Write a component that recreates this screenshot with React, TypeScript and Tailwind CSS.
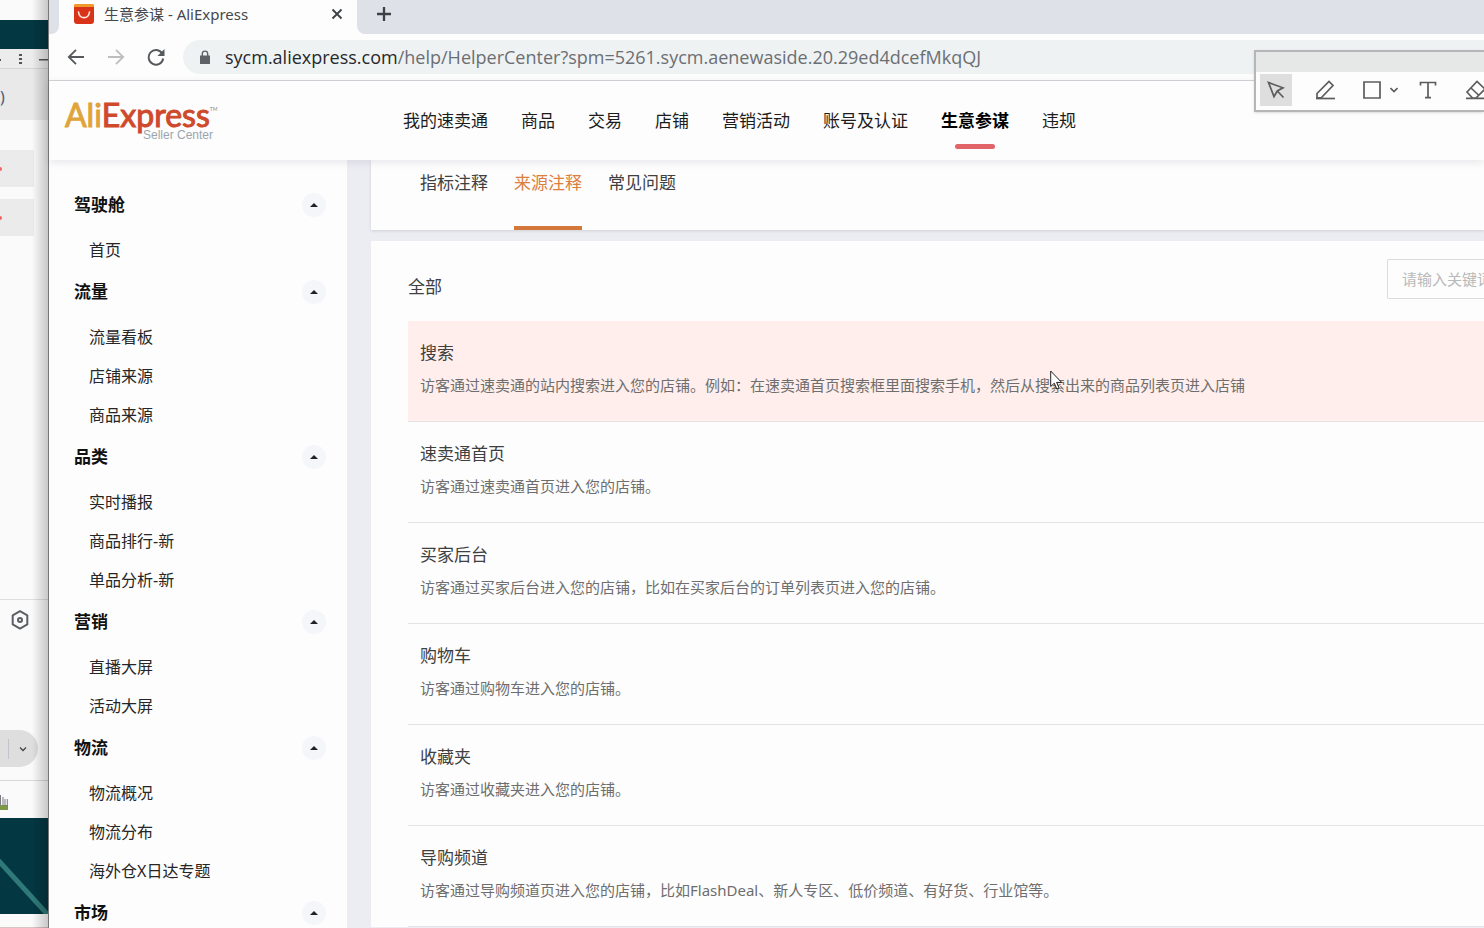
import { ReactNode } from "react";

type Group = { title: string; items: string[] };

const groups: Group[] = [
  { title: "驾驶舱", items: ["首页"] },
  { title: "流量", items: ["流量看板", "店铺来源", "商品来源"] },
  { title: "品类", items: ["实时播报", "商品排行-新", "单品分析-新"] },
  { title: "营销", items: ["直播大屏", "活动大屏"] },
  { title: "物流", items: ["物流概况", "物流分布", "海外仓X日达专题"] },
  { title: "市场", items: [] },
];

const navItems = ["我的速卖通", "商品", "交易", "店铺", "营销活动", "账号及认证", "生意参谋", "违规"];
const tabs = ["指标注释", "来源注释", "常见问题"];

const sources = [
  { name: "搜索", text: "访客通过速卖通的站内搜索进入您的店铺。例如：在速卖通首页搜索框里面搜索手机，然后从搜索出来的商品列表页进入店铺" },
  { name: "速卖通首页", text: "访客通过速卖通首页进入您的店铺。" },
  { name: "买家后台", text: "访客通过买家后台进入您的店铺，比如在买家后台的订单列表页进入您的店铺。" },
  { name: "购物车", text: "访客通过购物车进入您的店铺。" },
  { name: "收藏夹", text: "访客通过收藏夹进入您的店铺。" },
  { name: "导购频道", text: "访客通过导购频道页进入您的店铺，比如FlashDeal、新人专区、低价频道、有好货、行业馆等。" },
];

function IconButton({ label, className = "", children }: { label: string; className?: string; children: ReactNode }) {
  return (
    <button type="button" aria-label={label} className={`flex shrink-0 items-center justify-center ${className}`}>
      {children}
    </button>
  );
}

function BackgroundWindow() {
  return (
    <div className="relative flex w-12 shrink-0 flex-col overflow-hidden bg-[#fafafa]">
      <div className="h-5 shrink-0" />
      <div className="h-[29px] shrink-0 bg-[#033742]" />
      <div className="flex h-5 shrink-0 items-center border-b border-[#d4d4d4] bg-[#ececec]">
        <svg viewBox="0 0 48 20" className="h-5 w-12" fill="#555">
          <rect x="0" y="10" width="1" height="2" />
          <rect x="19" y="5" width="3" height="2" />
          <rect x="19" y="9" width="3" height="2" />
          <rect x="19" y="13" width="3" height="2" />
          <rect x="39" y="10" width="9" height="1.500" />
        </svg>
      </div>
      <div className="flex h-[51px] shrink-0 items-center bg-[#e9e9e9] pt-1 text-base text-[#4d5a75]">)</div>
      <div className="mt-[30px] flex h-[37px] w-[34px] shrink-0 items-center bg-[#ebebeb]">
        <span className="h-1 w-0.5 rounded-r bg-[#e66]" />
      </div>
      <div className="mt-3 flex h-[37px] w-[34px] shrink-0 items-center bg-[#ebebeb]">
        <span className="h-1 w-0.5 rounded-r bg-[#e66]" />
      </div>
      <div className="mt-[363px] flex h-[131px] shrink-0 flex-col border-t border-[#dedede] pt-2.5">
        <svg viewBox="0 0 20 20" className="ml-2.5 h-5 w-5" fill="none" stroke="#5c5f63" strokeWidth="2" strokeLinejoin="round">
          <path d="M10 1.2 17.3 5.4v9L10 18.6l-7.3-4.2v-9z" />
          <circle cx="10" cy="10" r="2" />
        </svg>
      </div>
      <div className="flex h-[37px] w-[38px] shrink-0 items-center rounded-r-full bg-[#dedede]">
        <span className="ml-2 h-5 w-px bg-[#c3c3cb]" />
        <svg viewBox="0 0 8 6" className="ml-2.5 h-1.5 w-2" fill="none" stroke="#444" strokeWidth="1.3">
          <path d="M1 1.5 4 4.5 7 1.5" />
        </svg>
      </div>
      <div className="mt-[13px] h-[38px] shrink-0 border-t border-[#d8d8d8] pt-3">
        <svg viewBox="0 0 10 17" className="h-[17px] w-2.5">
          <path d="M0 12h8v5H0z" fill="#7c9a45" />
          <path d="M.5 2v10M3 4v9M5 6v7M7.3 6v8" stroke="#777b80" strokeWidth="1" />
        </svg>
      </div>
      <div className="h-24 shrink-0 bg-[#033742]">
        <svg viewBox="0 0 48 96" className="h-24 w-12">
          <path d="M-2 42 49 98" stroke="#2f7a78" strokeWidth="5" />
        </svg>
      </div>
      <div className="mt-[13px] h-px shrink-0 bg-[#d5c5c5]" />
      <div className="absolute inset-y-0 right-0 w-4 bg-linear-to-r from-transparent to-black/20" />
    </div>
  );
}

function BrowserChrome() {
  return (
    <>
      <div className="flex h-[34px] shrink-0">
        <div className="w-2.5 rounded-br-lg bg-[#dee1e7]" />
        <div className="flex w-[298px] items-center pb-1.5 pl-[15px] pr-3.5">
          <svg viewBox="0 0 20 20" className="h-5 w-5">
            <rect width="20" height="20" rx="3" fill="#d9331a" />
            <path d="M2 0h16a2 2 0 0 1 2 3H0a2 2 0 0 1 2-3z" fill="#f09a2c" />
            <path d="M4.5 8c1 7.500 10 7.500 11 0" fill="none" stroke="#ffe9dd" strokeWidth="1.6" strokeLinecap="round" />
          </svg>
          <span className="ml-2.5 flex-1 text-[15px] leading-5 text-[#45484c]">生意参谋 - AliExpress</span>
          <IconButton label="关闭标签页">
            <svg viewBox="0 0 12 12" className="h-3 w-3" stroke="#3c4043" strokeWidth="1.8">
              <path d="M1.500 1.500 10.500 10.500M10.500 1.500 1.500 10.500" />
            </svg>
          </IconButton>
        </div>
        <div className="flex flex-1 items-center rounded-bl-lg bg-[#dee1e7] pb-1.5 pl-[19px]">
          <IconButton label="新标签页">
            <svg viewBox="0 0 16 16" className="h-4 w-4" stroke="#3c4043" strokeWidth="2.300">
              <path d="M8 1v14M1 8h14" />
            </svg>
          </IconButton>
        </div>
      </div>
      <div className="flex h-[47px] shrink-0 items-center border-b border-[#d3d5d8] pl-[18px]">
        <IconButton label="后退">
          <svg viewBox="0 0 18 18" className="h-[18px] w-[18px]" fill="none" stroke="#55585c" strokeWidth="1.8">
            <path d="M17 9H2M9 1.800 1.800 9 9 16.200" />
          </svg>
        </IconButton>
        <IconButton label="前进" className="ml-[22px]">
          <svg viewBox="0 0 18 18" className="h-[18px] w-[18px]" fill="none" stroke="#bcbec0" strokeWidth="1.8">
            <path d="M1 9h15M9 1.800 16.200 9 9 16.200" />
          </svg>
        </IconButton>
        <IconButton label="重新加载" className="ml-[22px]">
          <svg viewBox="0 0 18 18" className="h-[18px] w-[18px]" fill="none" stroke="#55585c" strokeWidth="1.900">
            <path d="M15.200 5.500A7.300 7.300 0 1 0 16.200 10.500" />
            <path d="M17.500 1v7h-7z" fill="#55585c" stroke="none" />
          </svg>
        </IconButton>
        <div className="ml-[18px] flex h-[34px] flex-1 items-center rounded-l-full bg-[#eff2f3] pl-4">
          <svg viewBox="0 0 12 14" className="h-3.5 w-3" fill="#5f6368">
            <path d="M1 5.500h10V14H1z" />
            <path d="M3.300 6V3.800a2.700 2.700 0 0 1 5.400 0V6" fill="none" stroke="#5f6368" strokeWidth="1.400" />
          </svg>
          <p className="ml-3.5 whitespace-nowrap font-['Open_Sans','Noto_Sans',sans-serif] text-[18px] leading-6 text-[#6b6f73]">
            <span className="text-[#26282b]">sycm.aliexpress.com</span>
            /help/HelperCenter?spm=5261.sycm.aenewaside.20.29ed4dcefMkqQJ
          </p>
        </div>
      </div>
    </>
  );
}

function Logo() {
  return (
    <a href="#home" className="flex w-[150px] shrink-0 flex-col pb-0.5">
      <span className="flex font-['Lato',sans-serif] text-[32px] leading-8">
        <span className="text-[#dfa53c] [-webkit-text-stroke:1px_#dfa53c]">Ali</span>
        <span className="text-[#cf4a2c] [-webkit-text-stroke:1px_#cf4a2c]">Express</span>
        <span className="text-[5px] leading-[20px] text-[#888]">TM</span>
      </span>
      <span className="-mt-0.5 self-end pr-0.5 font-['Liberation_Sans',sans-serif] text-xs leading-3 text-[#9ba5ae]">
        Seller Center
      </span>
    </a>
  );
}

function SiteHeader() {
  return (
    <header className="relative z-10 flex h-[79px] shrink-0 items-center bg-[#fdfdfd] pl-4 shadow-[0_2px_8px_rgba(60,60,90,0.12)]">
      <Logo />
      <nav className="ml-[188px] flex gap-[33px] whitespace-nowrap pt-px text-[17px] leading-6 text-[#1c1c1c]">
        {navItems.map((item) =>
          item === "生意参谋" ? (
            <a key={item} href="#nav" className="relative font-bold text-black">
              {item}
              <span className="absolute -bottom-4 left-1/2 h-[5px] w-10 -translate-x-1/2 rounded-full bg-[#e16468]" />
            </a>
          ) : (
            <a key={item} href="#nav">
              {item}
            </a>
          ),
        )}
      </nav>
    </header>
  );
}

function Sidebar() {
  return (
    <aside className="w-[298px] shrink-0 bg-[#fdfdfd] pl-[25px] pr-[21px] pt-[22px]">
      {groups.map((group) => (
        <section key={group.title}>
          <h2 className="mb-0.5 flex h-[46px] items-center justify-between text-[17px] font-bold leading-6 text-[#111]">
            {group.title}
            <IconButton label={`收起${group.title}`} className="h-6 w-6 rounded-full bg-[#f4f6fa]">
              <svg viewBox="0 0 8 4" className="h-1 w-2" fill="#222">
                <path d="M4 0 8 4H0z" />
              </svg>
            </IconButton>
          </h2>
          <ul className="pl-[15px] text-base leading-6 text-[#262626]">
            {group.items.map((item) => (
              <li key={item} className="flex h-[39px] items-center">
                <a href="#menu">{item}</a>
              </li>
            ))}
          </ul>
        </section>
      ))}
    </aside>
  );
}

function Content() {
  return (
    <main className="min-w-0 flex-1 bg-[#ecedf2] pl-6">
      <div role="tablist" className="flex h-[70px] gap-[26px] bg-[#fdfdfd] pl-[49px] text-[17px] leading-6 text-[#404040] shadow-[0_1px_3px_rgba(0,0,0,0.12)]">
        {tabs.map((tab) =>
          tab === "来源注释" ? (
            <button key={tab} type="button" role="tab" aria-selected="true" className="flex border-b-4 border-[#d4773a] pt-[11px] text-[#dc7f3e]">
              {tab}
            </button>
          ) : (
            <button key={tab} type="button" role="tab" aria-selected="false" className="flex pt-[11px]">
              {tab}
            </button>
          ),
        )}
      </div>
      <section className="mt-[11px] bg-[#fdfdfd] pl-[37px] pt-[18px]">
        <div className="mb-[22px] flex items-end justify-between">
          <h1 className="text-[17px] leading-6 text-[#404040]">全部</h1>
          <input
            type="text"
            aria-label="请输入关键词"
            placeholder="请输入关键词"
            className="h-10 w-[97px] rounded-l-xs border border-r-0 border-[#dcdcdc] bg-transparent pl-3.5 text-[15px] text-[#404040] placeholder:text-[#b9b9b9]"
          />
        </div>
        <ul>
          {sources.map((source, index) => (
            <li
              key={source.name}
              className={`h-[101px] whitespace-nowrap border-b border-[#e4e4e6] pl-3 pt-5 ${index === 0 ? "bg-[#ffeeec]" : ""}`}
            >
              <h3 className="text-[17px] leading-6 text-[#404040]">{source.name}</h3>
              <p className="mt-2.5 text-[15px] leading-5 text-[#6e6e6e]">{source.text}</p>
            </li>
          ))}
        </ul>
      </section>
    </main>
  );
}

function AnnotationToolbar() {
  return (
    <div className="absolute right-0 top-[50px] z-20 w-[230px] overflow-hidden border-2 border-r-0 border-[#b4b6b8] bg-[#fdfdfd] shadow-sm">
      <div className="h-5 bg-[#e6e7e7]" />
      <div className="flex h-[38px] items-center pb-0.5 pl-1 text-[#5c5c5c]">
        <IconButton label="选择" className="h-8 w-8 bg-[#dedede]">
          <svg viewBox="0 0 18 18" className="h-[18px] w-[18px]" fill="none" stroke="currentColor" strokeWidth="1.700">
            <path d="M1.500 1.500 16 6.800 10.300 10 7 15.500zM10.300 10 16.500 16.500" />
          </svg>
        </IconButton>
        <IconButton label="画笔" className="ml-[23px]">
          <svg viewBox="0 0 20 20" className="h-5 w-5" fill="none" stroke="currentColor" strokeWidth="1.700">
            <path d="M2 18v-4.500L14 1.500 18 5.500 6.500 17.500z" />
            <path d="M1 18.500h19" />
          </svg>
        </IconButton>
        <IconButton label="矩形" className="ml-7">
          <svg viewBox="0 0 18 18" className="h-[18px] w-[18px]" fill="none" stroke="currentColor" strokeWidth="1.700">
            <path d="M1 1h16v16H1z" />
          </svg>
        </IconButton>
        <IconButton label="更多形状" className="ml-[9px]">
          <svg viewBox="0 0 8 6" className="h-1.5 w-2" fill="none" stroke="currentColor" strokeWidth="1.600">
            <path d="M.5 1 4 4.500 7.500 1" />
          </svg>
        </IconButton>
        <IconButton label="文字" className="ml-[21px]">
          <svg viewBox="0 0 18 18" className="h-[18px] w-[18px]" fill="none" stroke="currentColor" strokeWidth="1.700">
            <path d="M1.500 4.500V1.500h15v3M9 1.500v15M6 16.700h6" />
          </svg>
        </IconButton>
        <IconButton label="橡皮擦" className="ml-7">
          <svg viewBox="0 0 22 20" className="h-5 w-[22px]" fill="none" stroke="currentColor" strokeWidth="1.700">
            <path d="M2 12 12 1.500l8 7.500-9 9H7.500zM6 8l8 7.500M1 18.300h21" />
          </svg>
        </IconButton>
      </div>
    </div>
  );
}

export default function App() {
  return (
    <div className="relative flex h-screen overflow-hidden font-['Noto_Sans','Noto_Sans_CJK_SC',sans-serif]">
      <BackgroundWindow />
      <div className="flex min-w-0 flex-1 flex-col border-l border-[#777] bg-[#fdfdfd]">
        <BrowserChrome />
        <SiteHeader />
        <div className="flex min-h-0 flex-1 overflow-hidden">
          <Sidebar />
          <Content />
        </div>
      </div>
      <AnnotationToolbar />
      <svg viewBox="0 0 13 20" className="absolute left-[1050px] top-[370px] h-5 w-[13px]" fill="#fff" stroke="#222" strokeWidth="1">
        <path d="M.7 1v15.500l3.600-3.300 2.500 5.800 2.300-1-2.500-5.600h5z" />
      </svg>
    </div>
  );
}
